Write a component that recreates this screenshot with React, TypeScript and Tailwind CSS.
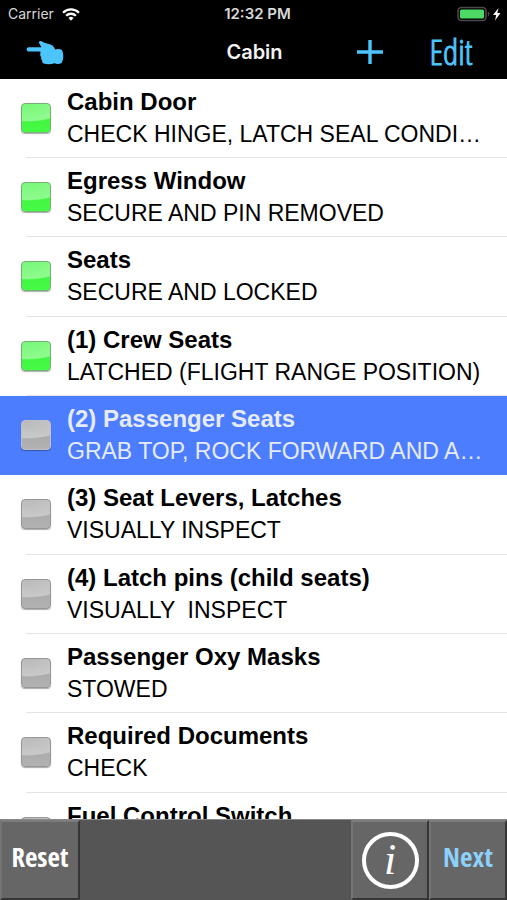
type Item = { title: string; detail?: string; done?: boolean; selected?: boolean };

const items: Item[] = [
  { title: "Cabin Door", detail: "CHECK HINGE, LATCH SEAL CONDITION", done: true },
  { title: "Egress Window", detail: "SECURE AND PIN REMOVED", done: true },
  { title: "Seats", detail: "SECURE AND LOCKED", done: true },
  { title: "(1) Crew Seats", detail: "LATCHED (FLIGHT RANGE POSITION)", done: true },
  { title: "(2) Passenger Seats", detail: "GRAB TOP, ROCK FORWARD AND AFT", selected: true },
  { title: "(3) Seat Levers, Latches", detail: "VISUALLY INSPECT" },
  { title: "(4) Latch pins (child seats)", detail: "VISUALLY  INSPECT" },
  { title: "Passenger Oxy Masks", detail: "STOWED" },
  { title: "Required Documents", detail: "CHECK" },
  { title: "Fuel Control Switch" },
];

function StatusBar() {
  return (
    <div className="relative flex h-7 items-center justify-between pl-2 pr-1 text-[#d8d8d8]">
      <div className="flex items-center gap-2">
        <span className="font-[Inter,sans-serif] text-sm">Carrier</span>
        <svg width="18" height="13" viewBox="0 0 17 12" fill="none" stroke="#fff" strokeWidth="2.2" aria-hidden="true">
          <path d="M1 4.3a10.6 10.6 0 0 1 15 0" />
          <path d="M3.9 7.2a6.5 6.5 0 0 1 9.2 0" />
          <path d="M8.5 11.8 6.1 9.4a3.4 3.4 0 0 1 4.8 0z" fill="#fff" stroke="none" />
        </svg>
      </div>
      <span className="absolute inset-x-0 pl-2 text-center font-[Inter,sans-serif] text-[15px] font-semibold">12:32 PM</span>
      <svg width="46" height="16" viewBox="0 0 46 16" aria-hidden="true">
        <rect x="1" y="1.5" width="28" height="13" rx="3.5" fill="none" stroke="#4a4a4a" strokeWidth="1.6" />
        <rect x="3" y="3.5" width="24" height="9" rx="1.5" fill="#4cd964" />
        <path d="M30.8 5.5c2 .8 2 4.2 0 5z" fill="#4a4a4a" />
        <path d="M41.5 2 36 9h3.2L38 14.5 43.5 7h-3.2z" fill="#fff" />
      </svg>
    </div>
  );
}

function NavBar() {
  return (
    <div className="relative flex h-[51px] items-center justify-between pb-1 pl-6 pr-8 text-[#4cc5fc]">
      <button type="button" aria-label="Back" className="cursor-pointer">
        <svg width="42" height="32" viewBox="0 0 42 32" fill="currentColor" aria-hidden="true">
          <path d="M4.5 11.2H17.5L15.4 7.8C14.4 5.8 15.4 4.6 17.4 5.2C19.4 6.3 21.5 7.2 24 7.8C27.5 8.6 30 10 31.2 13.6C33 12.6 36 12.6 38 14C39.8 18 39.8 23 37.7 27C35.5 28.3 32.5 28.4 30.6 27.3C27 28.4 22.5 28.6 19.6 27.4C18.2 26.6 18 25.4 18.3 24.4C17.1 23.6 16.8 22.2 17.3 21C16.2 20 15.8 18.4 16.5 17L16.3 15.5H4.5C2 15.4 2 11.3 4.5 11.2Z" />
        </svg>
      </button>
      <h1 className="absolute inset-x-20 pl-0.5 text-center font-[Inter,sans-serif] text-xl font-semibold text-[#f2f2f2]">Cabin</h1>
      <div className="relative flex items-center gap-11">
        <button type="button" aria-label="Add" className="cursor-pointer">
          <svg width="26" height="24" viewBox="0 0 26 24" stroke="currentColor" strokeWidth="3.4" aria-hidden="true">
            <path d="M0 12h26M13 0v24" />
          </svg>
        </button>
        <button type="button" className="w-12 cursor-pointer text-center font-['Open_Sans_Condensed_Light','Open_Sans_Condensed',sans-serif] text-[35px] font-light leading-8 [-webkit-text-stroke:1px_currentColor]">
          Edit
        </button>
      </div>
    </div>
  );
}

function Row({ title, detail, done, selected }: Item) {
  return (
    <li className={`h-[79px] nth-[3n]:h-20 ${selected ? "bg-[#4c7dfe]" : "bg-white"}`}>
      <label className="relative flex h-full cursor-pointer items-center pb-0.5 pl-[21px] pr-5">
        <input
          type="checkbox"
          defaultChecked={done}
          className={`mr-4 size-[30px] shrink-0 appearance-none rounded-[4px] border bg-[radial-gradient(ellipse_150%_64%_at_20%_0%,#bababa_0%,#c9c9c9_92%,transparent_100%),linear-gradient(#a4a4a4,#b2b2b2)] shadow-[0_1px_1px_#0005] checked:border-[#74b074] checked:bg-[radial-gradient(ellipse_150%_64%_at_20%_0%,#78f878_0%,#8ffb8f_92%,transparent_100%),linear-gradient(#3fee3f,#45fb45)] ${
            selected ? "border-[#c0c0c4]" : "border-[#969696]"
          }`}
        />
        <span className={`flex min-w-0 flex-1 flex-col ${selected ? "text-[#e6ebfb]" : "text-black"}`}>
          <span className="truncate text-2xl font-bold">{title}</span>
          <span className="h-8 truncate whitespace-pre text-[23px] leading-8">{detail}</span>
        </span>
        {!selected && <span className="absolute bottom-0 left-[26px] right-0 border-b border-[#e4e4e4]" />}
      </label>
    </li>
  );
}

const barButton =
  "flex h-20 cursor-pointer items-center justify-center border-2 border-t-[#7c7c7c] border-l-[#747474] border-r-[#363636] border-b-[#363636] bg-[#666]";

export default function App() {
  return (
    <div className="flex h-screen flex-col overflow-hidden bg-white font-['Liberation_Sans',Arial,sans-serif]">
      <header className="shrink-0 bg-black">
        <StatusBar />
        <NavBar />
      </header>

      <main className="min-h-0 flex-1 overflow-hidden">
        <ul>
          {items.map((item) => (
            <Row key={item.title} {...item} />
          ))}
        </ul>
      </main>

      <footer className="flex shrink-0 border-t border-[#888] bg-[#555] font-['Open_Sans_Condensed','Liberation_Sans_Narrow',sans-serif] text-[27px] font-bold">
        <button type="button" className={`${barButton} mr-auto w-20 pb-1.5 text-white`}>
          Reset
        </button>
        <button type="button" aria-label="Information" className={`${barButton} w-[78px]`}>
          <span className="flex size-[57px] items-center justify-center rounded-full border-4 border-white font-['Liberation_Serif',serif] text-[44px] font-normal italic leading-none text-white">
            i
          </span>
        </button>
        <button type="button" className={`${barButton} w-[78px] pb-1.5 text-[#8dd0fb]`}>
          Next
        </button>
      </footer>
    </div>
  );
}
